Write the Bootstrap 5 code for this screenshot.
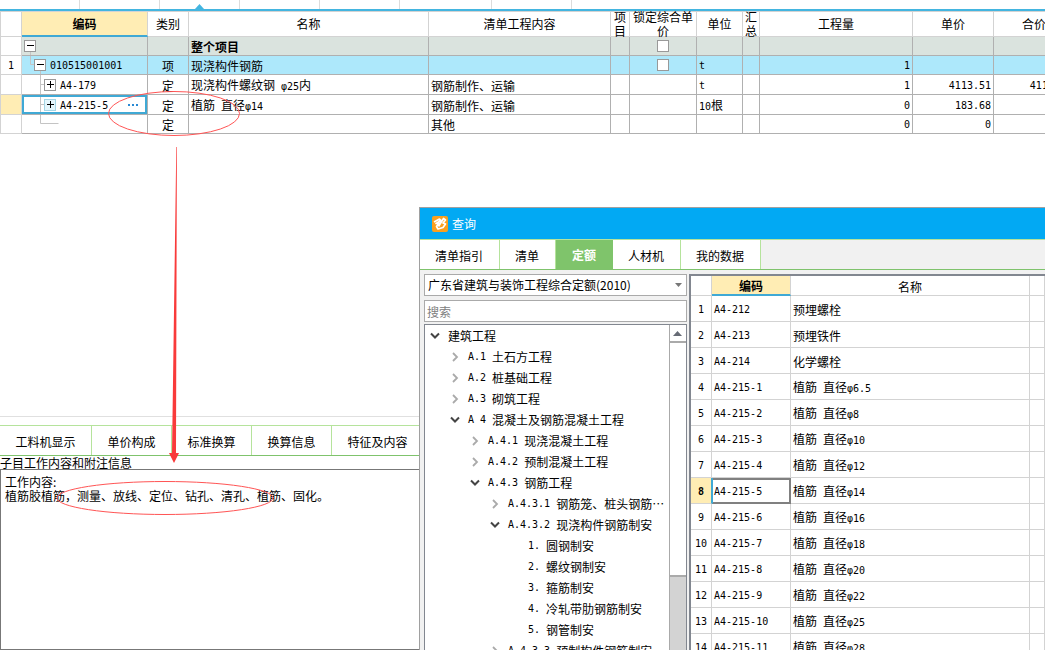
<!DOCTYPE html>
<html lang="zh-CN">
<head>
<meta charset="utf-8">
<meta name="viewport" content="width=device-width, initial-scale=1">
<title>查询</title>
<link href="https://cdn.jsdelivr.net/npm/bootstrap@5.3.0/dist/css/bootstrap.min.css" rel="stylesheet">
<style>
  body { font-family: "Noto Sans CJK SC", sans-serif; font-size: 12px; line-height: 14px; color: #000; background: #fff; }
  button, input, select, textarea { font: inherit; color: inherit; }
  .lat { font-family: "DejaVu Sans Mono", monospace; font-size: 10px; }
  .plain { appearance: none; border: 0; background: none; padding: 0; display: block; flex: none; }

  /* top strip */
  .strip { height: 11px; border-bottom: 2px solid #43b5e0; position: relative; }
  .strip span { flex: none; width: 80px; border-right: 1px solid #dcdcdc; }
  .strip .wide { width: 92px; }
  .marker { position: absolute; left: 195px; bottom: 0; display: block; }

  /* data grids */
  .sheet { table-layout: fixed; border-collapse: separate; border-spacing: 0; }
  .sheet th, .sheet td { padding: 2px 2px 0; border: 0 solid #b0b0b0; border-width: 0 1px 1px 0; white-space: nowrap; overflow: hidden; vertical-align: middle; }
  .sheet th { font-weight: 400; text-align: center; border-color: #d3d3d3; }
  .sheet .picked { background: #ffedb4; font-weight: 700; border-bottom: 2px solid #3fa9d5; }
  .sheet .rownum { text-align: center; border-color: #d3d3d3; padding: 2px 0 0; }
  .main-sheet { width: 1075px; border-left: 1px solid #d3d3d3; }
  .main-sheet thead th { height: 26px; border-top: 1px solid #d3d3d3; padding: 0; overflow: visible; }
  .main-sheet tbody td { height: 20px; }
  .main-sheet .short td { height: 19px; }
  .two-line { height: 28px; margin: -2px 0; white-space: normal; }
  .whole td:not(.rownum) { background: #dae3de; }
  .item td:not(.rownum) { background: #ade8fb; }
  .sheet .treecell { padding: 0; }
  .treecell .lat { padding-top: 2px; }
  .sheet .editing { box-shadow: inset 0 0 0 2px #3fa9d5; }
  .sheet .tickcell { padding: 0; }
  .tick { appearance: none; width: 12px; height: 12px; margin: 0; border: 1px solid #999; background: #fff; display: block; }

  /* lower pane */
  .lower { flex: 0 0 36vh; border-top: 1px solid #e0e0e0; padding-top: 8px; }
  .tabrow { border-top: 1px solid #b5e39c; border-bottom: 1px solid #7fc36c; height: 31px; }
  .tabrow button { flex: none; border-right: 1px solid #b5e39c; white-space: nowrap; }
  .lower .tabrow button { width: 80px; padding-top: 2px; }
  .lower .tabrow button:first-child { width: 92px; }
  .lower .tabrow button:last-child { width: 92px; }
  .notes-label { height: 13px; }
  .notes { resize: none; border: 1px solid #777; padding: 5px 4px; border-radius: 0; outline: 0; }

  /* lookup window */
  .lookup { position: absolute; left: 419px; top: 207px; right: 0; bottom: 0; border: 1px solid #a0a0a0; border-width: 1px 0 0 1px; background: #f1f1f1; }
  .caption-bar { height: 31px; background: #02a9f3; color: #fff; padding-left: 12px; }
  .lookup .tabrow button { background: #fff; padding: 3px 16px 0 15px; }
  .lookup .tabrow .current { background: #7fc46b; color: #fff; font-weight: 700; border-color: #7fc46b; padding: 0 14px; width: 57px; }
  .side { flex: 0 0 263px; }
  .field { width: 100%; height: 22px; border: 1px solid #aaa; background: #fff; padding: 0 3px; border-radius: 0; appearance: none; outline: 0; display: block; }
  .field::placeholder { color: #808080; opacity: 1; }
  .search { padding: 0 2px; }
  .dropmark { position: absolute; right: 5px; top: 9px; }
  .treebox { border: 1px solid #828790; border-bottom: 0; background: #fff; min-height: 0; margin-top: 2px; }
  .outline, .outline ul { list-style: none; margin: 0; padding: 0; }
  .outline ul { padding-left: 20px; }
  .outline .entry { height: 21px; display: flex; align-items: center; white-space: nowrap; }
  .outline .plain { width: 12px; margin-right: 7px; }
  .outline .leaf { padding-left: 19px; }
  .scroller { flex: 0 0 17px; background: #d3d3d3; border-left: 1px solid #aaa; }
  .scroller .up { height: 18px; background: #fff; border-bottom: 2px solid #aaa; width: 100%; padding-left: 3px; }
  .scroller .thumb { height: 72%; background: #fff; border-bottom: 2px solid #aaa; }
  .result { border: 2px solid #828790; border-width: 2px 0 0 2px; background: #fff; min-height: 0; margin-left: 2px; }
  .result-sheet { width: 100%; }
  .result-sheet th, .result-sheet td { border-color: #d3d3d3; }
  .result-sheet thead th { height: 20px; }
  .result-sheet tbody td { height: 26px; }
  .result-sheet .active-num { background: #ffedb4; font-weight: 700; border-right: 1px solid #3fa9d5; }
  .result-sheet .active-cell { box-shadow: inset 0 2px #808080, inset -1px -1px #808080; border-color: #808080; }
  .result-sheet .active-cell { border-left: 1px solid #3fa9d5; padding-left: 1px; }

  .markup { position: absolute; left: 0; top: 0; pointer-events: none; }
</style>
</head>
<body>
<div class="vh-100 d-flex flex-column overflow-hidden position-relative">

  <div class="strip d-flex flex-shrink-0">
    <span></span><span></span><span></span><span></span><span></span><span class="wide"></span><span></span>
    <svg class="marker" width="9" height="5"><path d="M0 5 4.500 0 9 5z" fill="#43b5e0"/></svg>
  </div>

  <main class="flex-grow-1 overflow-hidden">
    <table class="sheet main-sheet">
      <colgroup>
        <col style="width:21px"><col style="width:126px"><col style="width:41px"><col style="width:240px"><col style="width:182px"><col style="width:19px"><col style="width:67px"><col style="width:46px"><col style="width:17px"><col style="width:153px"><col style="width:81px"><col style="width:81px">
      </colgroup>
      <thead>
        <tr>
          <th></th><th class="picked">编码</th><th>类别</th><th>名称</th><th>清单工程内容</th>
          <th><div class="two-line">项<br>目</div></th><th><div class="two-line">锁定综合单<br>价</div></th>
          <th>单位</th><th><div class="two-line">汇<br>总</div></th><th>工程量</th><th>单价</th><th>合价</th>
        </tr>
      </thead>
      <tbody>
        <tr class="whole short">
          <td class="rownum"></td>
          <td class="treecell"><button class="plain" aria-label="折叠"><svg class="d-block" width="20" height="18"><path d="M8.500 15v3" stroke="#c4c4c4"/><rect x="2.500" y="3.500" width="11" height="11" fill="#fff" stroke="#999"/><path d="M5 8.500h7" stroke="#000"/></svg></button></td>
          <td></td><td class="fw-bold">整个项目</td><td></td><td></td>
          <td class="tickcell"><div class="d-flex justify-content-center"><input type="checkbox" class="tick" aria-label="锁定综合单价"></div></td>
          <td></td><td></td><td></td><td></td><td></td>
        </tr>
        <tr class="item short">
          <td class="rownum lat">1</td>
          <td class="treecell"><div class="d-flex align-items-center"><button class="plain" aria-label="折叠"><svg class="d-block" width="28" height="18"><path d="M8.500 0v8.500h4M18.500 15v3" fill="none" stroke="#c4c4c4"/><rect x="12.500" y="3.500" width="11" height="11" fill="#fff" stroke="#999"/><path d="M15 8.500h7" stroke="#000"/></svg></button><span class="lat">010515001001</span></div></td>
          <td class="text-center">项</td><td>现浇构件钢筋</td><td></td><td></td>
          <td class="tickcell"><div class="d-flex justify-content-center"><input type="checkbox" class="tick" aria-label="锁定综合单价"></div></td>
          <td class="lat">t</td><td></td><td class="lat text-end">1</td><td></td><td></td>
        </tr>
        <tr>
          <td class="rownum"></td>
          <td class="treecell"><div class="d-flex align-items-center"><button class="plain" aria-label="展开"><svg class="d-block" width="38" height="19"><path d="M18.500 0v19M18 9.500h4" fill="none" stroke="#c4c4c4"/><rect x="22.500" y="4.500" width="11" height="11" fill="#fff" stroke="#999"/><path d="M25 9.500h7M28.500 6v7" stroke="#000"/></svg></button><span class="lat">A4-179</span></div></td>
          <td class="text-center">定</td><td>现浇构件螺纹钢<span class="lat"> φ25</span>内</td><td>钢筋制作、运输</td><td></td><td></td>
          <td class="lat">t</td><td></td><td class="lat text-end">1</td><td class="lat text-end">4113.51</td><td class="lat text-end">4113.51</td>
        </tr>
        <tr>
          <td class="rownum picked" style="border-bottom:1px solid #d3d3d3"></td>
          <td class="treecell editing"><div class="d-flex align-items-center"><button class="plain" aria-label="展开"><svg class="d-block" width="38" height="19"><path d="M18.500 2v15M18 9.500h4" fill="none" stroke="#c4c4c4"/><rect x="22.500" y="4.500" width="11" height="11" fill="#e4f6fc" stroke="#a5d5e5"/><path d="M25 9.500h7M28.500 6v7" stroke="#000"/></svg></button><span class="lat flex-grow-1">A4-215-5</span><button class="plain pe-2" aria-label="更多"><svg class="d-block" width="12" height="8"><path d="M1 3h2v2H1zM5 3h2v2H5zM9 3h2v2H9z" fill="#2a8ad4"/></svg></button></div></td>
          <td class="text-center">定</td><td>植筋<span class="lat"> </span>直径<span class="lat">φ14</span></td><td>钢筋制作、运输</td><td></td><td></td>
          <td><span class="lat">10</span>根</td><td></td><td class="lat text-end">0</td><td class="lat text-end">183.68</td><td></td>
        </tr>
        <tr class="short">
          <td class="rownum"></td>
          <td class="treecell"><svg class="d-block" width="40" height="18"><path d="M18.500 0v8.500h18" fill="none" stroke="#c4c4c4"/></svg></td>
          <td class="text-center">定</td><td></td><td>其他</td><td></td><td></td>
          <td></td><td></td><td class="lat text-end">0</td><td class="lat text-end">0</td><td></td>
        </tr>
      </tbody>
    </table>
  </main>

  <section class="lower d-flex flex-column">
    <div class="tabrow d-flex flex-shrink-0">
      <button class="plain">工料机显示</button><button class="plain">单价构成</button><button class="plain">标准换算</button><button class="plain">换算信息</button><button class="plain">特征及内容</button>
    </div>
    <label for="notes" class="notes-label flex-shrink-0">子目工作内容和附注信息</label>
    <textarea id="notes" class="notes flex-grow-1 w-100">工作内容:
植筋胶植筋，测量、放线、定位、钻孔、清孔、植筋、固化。</textarea>
  </section>

  <section class="lookup d-flex flex-column" role="dialog" aria-labelledby="lookup-title">
    <div class="caption-bar d-flex align-items-center flex-shrink-0">
      <svg width="16" height="16" viewBox="0 0 16 16"><rect width="16" height="16" rx="2" fill="#f9a01f"/><path d="M2 6 7.500 3 9 4.500 4 7.500 7 7 4.500 10.500 6 13 11 11.500 13.500 8 11 7 13.500 4 11.500 2.500 6.500 10.500" fill="none" stroke="#fff" stroke-width="1.700" stroke-linejoin="round"/></svg>
      <span id="lookup-title" class="ms-1">查询</span>
    </div>
    <div class="tabrow d-flex flex-shrink-0">
      <button class="plain">清单指引</button><button class="plain">清单</button><button class="plain current">定额</button><button class="plain">人材机</button><button class="plain">我的数据</button>
    </div>
    <div class="d-flex flex-grow-1 pt-1 ps-1" style="min-height:0">
      <div class="side d-flex flex-column">
        <div class="position-relative flex-shrink-0 mb-1">
          <select class="field" aria-label="定额库"><option>广东省建筑与装饰工程综合定额(2010)</option></select>
          <svg class="dropmark" width="7" height="4"><path d="M0 0h7L3.500 4z" fill="#777"/></svg>
        </div>
        <input type="text" class="field search flex-shrink-0" placeholder="搜索" aria-label="搜索">
        <div class="treebox d-flex flex-grow-1 overflow-hidden">
          <ul class="outline flex-grow-1 overflow-hidden ps-1">
            <li><div class="entry"><button class="plain" aria-label="折叠"><svg class="d-block" width="12" height="12"><use href="#open"/></svg></button>建筑工程</div>
              <ul>
                <li><div class="entry"><button class="plain" aria-label="展开"><svg class="d-block" width="12" height="12"><use href="#shut"/></svg></button><span class="lat">A.1&nbsp;</span>土石方工程</div></li>
                <li><div class="entry"><button class="plain" aria-label="展开"><svg class="d-block" width="12" height="12"><use href="#shut"/></svg></button><span class="lat">A.2&nbsp;</span>桩基础工程</div></li>
                <li><div class="entry"><button class="plain" aria-label="展开"><svg class="d-block" width="12" height="12"><use href="#shut"/></svg></button><span class="lat">A.3&nbsp;</span>砌筑工程</div></li>
                <li><div class="entry"><button class="plain" aria-label="折叠"><svg class="d-block" width="12" height="12"><use href="#open"/></svg></button><span class="lat">A&nbsp;4&nbsp;</span>混凝土及钢筋混凝土工程</div>
                  <ul>
                    <li><div class="entry"><button class="plain" aria-label="展开"><svg class="d-block" width="12" height="12"><use href="#shut"/></svg></button><span class="lat">A.4.1&nbsp;</span>现浇混凝土工程</div></li>
                    <li><div class="entry"><button class="plain" aria-label="展开"><svg class="d-block" width="12" height="12"><use href="#shut"/></svg></button><span class="lat">A.4.2&nbsp;</span>预制混凝土工程</div></li>
                    <li><div class="entry"><button class="plain" aria-label="折叠"><svg class="d-block" width="12" height="12"><use href="#open"/></svg></button><span class="lat">A.4.3&nbsp;</span>钢筋工程</div>
                      <ul>
                        <li><div class="entry"><button class="plain" aria-label="展开"><svg class="d-block" width="12" height="12"><use href="#shut"/></svg></button><span class="lat">A.4.3.1&nbsp;</span>钢筋笼、桩头钢筋…</div></li>
                        <li><div class="entry"><button class="plain" aria-label="折叠"><svg class="d-block" width="12" height="12"><use href="#open"/></svg></button><span class="lat">A.4.3.2&nbsp;</span>现浇构件钢筋制安</div>
                          <ul>
                            <li><div class="entry leaf"><span class="lat">1.&nbsp;</span>圆钢制安</div></li>
                            <li><div class="entry leaf"><span class="lat">2.&nbsp;</span>螺纹钢制安</div></li>
                            <li><div class="entry leaf"><span class="lat">3.&nbsp;</span>箍筋制安</div></li>
                            <li><div class="entry leaf"><span class="lat">4.&nbsp;</span>冷轧带肋钢筋制安</div></li>
                            <li><div class="entry leaf"><span class="lat">5.&nbsp;</span>钢管制安</div></li>
                          </ul>
                        </li>
                        <li><div class="entry"><button class="plain" aria-label="展开"><svg class="d-block" width="12" height="12"><use href="#shut"/></svg></button><span class="lat">A.4.3.3&nbsp;</span>预制构件钢筋制安</div></li>
                      </ul>
                    </li>
                  </ul>
                </li>
              </ul>
            </li>
          </ul>
          <div class="scroller">
            <button class="plain up" aria-label="向上滚动"><svg class="d-block" width="9" height="5"><path d="M0 5 4.500 0 9 5z" fill="#666b75"/></svg></button>
            <div class="thumb"></div>
          </div>
        </div>
      </div>
      <div class="result flex-grow-1 overflow-hidden">
        <table class="sheet result-sheet">
          <colgroup><col style="width:21px"><col style="width:79px"><col style="width:239px"><col></colgroup>
          <thead><tr><th></th><th class="picked">编码</th><th>名称</th><th></th></tr></thead>
          <tbody>
            <tr><td class="rownum lat">1</td><td class="lat">A4-212</td><td>预埋螺栓</td><td></td></tr>
            <tr><td class="rownum lat">2</td><td class="lat">A4-213</td><td>预埋铁件</td><td></td></tr>
            <tr><td class="rownum lat">3</td><td class="lat">A4-214</td><td>化学螺栓</td><td></td></tr>
            <tr><td class="rownum lat">4</td><td class="lat">A4-215-1</td><td>植筋<span class="lat"> </span>直径<span class="lat">φ6.5</span></td><td></td></tr>
            <tr><td class="rownum lat">5</td><td class="lat">A4-215-2</td><td>植筋<span class="lat"> </span>直径<span class="lat">φ8</span></td><td></td></tr>
            <tr><td class="rownum lat">6</td><td class="lat">A4-215-3</td><td>植筋<span class="lat"> </span>直径<span class="lat">φ10</span></td><td></td></tr>
            <tr><td class="rownum lat">7</td><td class="lat">A4-215-4</td><td>植筋<span class="lat"> </span>直径<span class="lat">φ12</span></td><td></td></tr>
            <tr><td class="rownum lat active-num">8</td><td class="lat active-cell">A4-215-5</td><td>植筋<span class="lat"> </span>直径<span class="lat">φ14</span></td><td></td></tr>
            <tr><td class="rownum lat">9</td><td class="lat">A4-215-6</td><td>植筋<span class="lat"> </span>直径<span class="lat">φ16</span></td><td></td></tr>
            <tr><td class="rownum lat">10</td><td class="lat">A4-215-7</td><td>植筋<span class="lat"> </span>直径<span class="lat">φ18</span></td><td></td></tr>
            <tr><td class="rownum lat">11</td><td class="lat">A4-215-8</td><td>植筋<span class="lat"> </span>直径<span class="lat">φ20</span></td><td></td></tr>
            <tr><td class="rownum lat">12</td><td class="lat">A4-215-9</td><td>植筋<span class="lat"> </span>直径<span class="lat">φ22</span></td><td></td></tr>
            <tr><td class="rownum lat">13</td><td class="lat">A4-215-10</td><td>植筋<span class="lat"> </span>直径<span class="lat">φ25</span></td><td></td></tr>
            <tr><td class="rownum lat">14</td><td class="lat">A4-215-11</td><td>植筋<span class="lat"> </span>直径<span class="lat">φ28</span></td><td></td></tr>
          </tbody>
        </table>
      </div>
    </div>
  </section>

  <!-- hand-drawn notes over the page -->
  <svg class="markup" width="300" height="530">
    <defs>
      <path id="open" d="M2 3.500 6 7.500 10 3.500" fill="none" stroke="#444" stroke-width="2"/>
      <path id="shut" d="M4 2 8 6 4 10" fill="none" stroke="#aaa" stroke-width="1.800"/>
    </defs>
    <g fill="none" stroke="#f55" stroke-width="1">
      <ellipse cx="174" cy="113.500" rx="65.500" ry="22"/>
      <ellipse cx="165" cy="498" rx="108" ry="16.500"/>
    </g>
    <path d="M176.300 147h.6L176 453h3L174 463l-5-10h3z" fill="#f93a3a"/>
  </svg>
</div>
<script src="https://cdn.jsdelivr.net/npm/bootstrap@5.3.0/dist/js/bootstrap.bundle.min.js"></script>
</body>
</html>
